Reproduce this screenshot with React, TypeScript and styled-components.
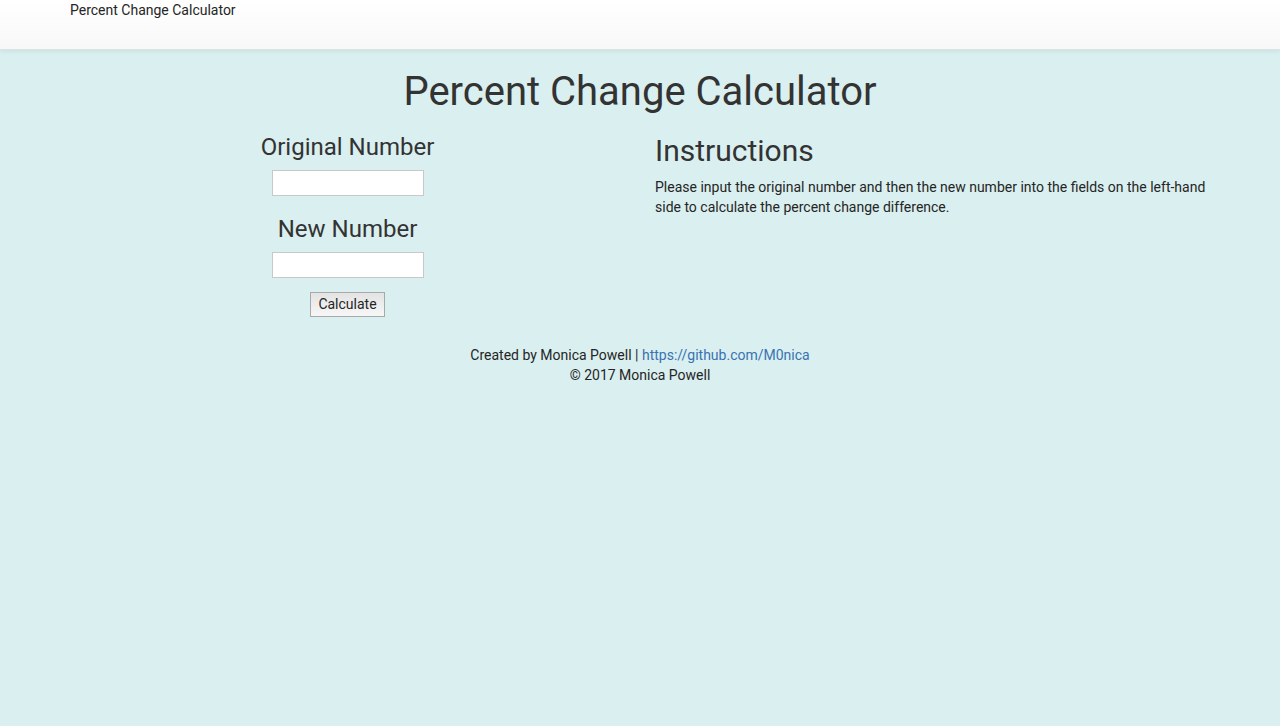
import React, { useState } from "react";
import styled, { createGlobalStyle } from "styled-components";

const GlobalStyle = createGlobalStyle`
  *, *::before, *::after { box-sizing: border-box; }
  body {
    margin: 0;
    background: #daefef;
    color: #252525;
    font: 14px/20px Roboto, "Liberation Sans", sans-serif;
  }
`;

const Navbar = styled.nav`
  min-height: 50px;
  border-bottom: 1px solid #dce3e3;
  background: linear-gradient(to bottom, #fff, #f8f8f8);
  box-shadow: 0 1px 5px rgba(0, 0, 0, 0.075);
`;

const Container = styled.div`
  width: 100%;
  max-width: 1170px;
  margin: 0 auto;
  padding: 0 15px;
`;

const Title = styled.h1`
  margin: 20px 0 10px;
  color: #333;
  font-size: 40px;
  font-weight: 400;
  line-height: 44px;
  text-align: center;
`;

const Columns = styled.div`
  display: grid;
  grid-template-columns: 1fr 1fr;
  gap: 30px;
`;

const Form = styled.form`
  display: flex;
  flex-direction: column;
  align-items: center;
`;

const FieldLabel = styled.label`
  margin: 10px 0;
  color: #333;
  font-size: 24px;
  line-height: 26px;
`;

const NumberInput = styled.input`
  width: 152px;
  height: 26px;
  margin-bottom: 10px;
  padding: 1px 4px;
  border: 1px solid #c8c8c8;
  background: #fff;
  font: inherit;
`;

const CalculateButton = styled.button`
  height: 25px;
  margin-top: 4px;
  padding: 0 7px 1px;
  border: 1px solid #a9a9a9;
  background: linear-gradient(to bottom, #e3e3e3, #f7f7f7);
  color: #252525;
  font: inherit;
`;

const Heading = styled.h2`
  margin: 10px 0;
  color: #333;
  font-size: 30px;
  font-weight: 400;
  line-height: 33px;
`;

const Text = styled.p`
  margin: 0;
`;

const Footer = styled.footer`
  margin-top: 28px;
  text-align: center;
`;

const Link = styled.a`
  color: #3873b3;
  text-decoration: none;
`;

export default function App() {
  const [original, setOriginal] = useState("");
  const [next, setNext] = useState("");
  const [change, setChange] = useState<number | null>(null);

  const calculate = (event: React.FormEvent) => {
    event.preventDefault();
    const from = parseFloat(original);
    const result = ((parseFloat(next) - from) / from) * 100;
    setChange(Number.isFinite(result) ? result : null);
  };

  return (
    <>
      <GlobalStyle />
      <Navbar>
        <Container>Percent Change Calculator</Container>
      </Navbar>
      <Container as="main">
        <Title>Percent Change Calculator</Title>
        <Columns>
          <Form onSubmit={calculate}>
            <FieldLabel htmlFor="original">Original Number</FieldLabel>
            <NumberInput id="original" value={original} onChange={(e) => setOriginal(e.target.value)} />
            <FieldLabel htmlFor="new">New Number</FieldLabel>
            <NumberInput id="new" value={next} onChange={(e) => setNext(e.target.value)} />
            <CalculateButton type="submit">Calculate</CalculateButton>
            {change !== null && <output htmlFor="original new">{change.toFixed(2)}%</output>}
          </Form>
          <section>
            <Heading>Instructions</Heading>
            <Text>
              Please input the original number and then the new number into the fields on the left-hand side to
              calculate the percent change difference.
            </Text>
          </section>
        </Columns>
        <Footer>
          Created by Monica Powell | <Link href="https://github.com/M0nica">https://github.com/M0nica</Link>
          <br />© 2017 Monica Powell
        </Footer>
      </Container>
    </>
  );
}
